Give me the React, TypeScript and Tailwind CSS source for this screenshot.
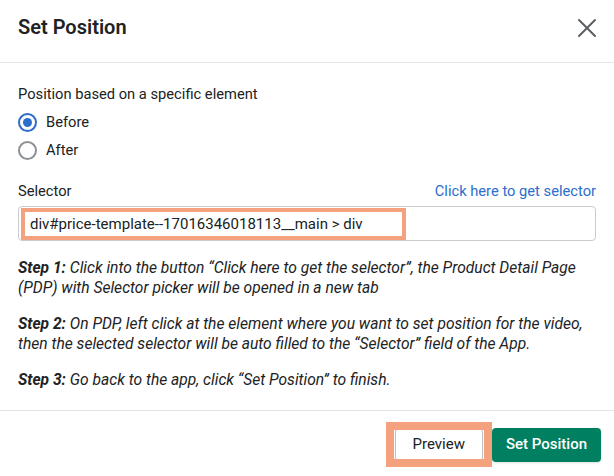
import React, { useState } from 'react';

const STEPS = [
  {
    label: 'Step 1:',
    text: ' Click into the button \u201CClick here to get the selector\u201D, the Product Detail Page (PDP) with Selector picker will be opened in a new tab',
  },
  {
    label: 'Step 2:',
    text: ' On PDP, left click at the element where you want to set position for the video, then the selected selector will be auto filled to the \u201CSelector\u201D field of the App.',
  },
  {
    label: 'Step 3:',
    text: ' Go back to the app, click \u201CSet Position\u201D to finish.',
  },
];

function Radio({ label, checked, onSelect }: { label: string; checked: boolean; onSelect: () => void }) {
  return (
    <label className="flex h-[28px] items-center gap-[9px] cursor-pointer" onClick={onSelect}>
      <span
        className={
          checked
            ? 'flex h-[19px] w-[19px] items-center justify-center rounded-full border-2 border-[#2c6ecb]'
            : 'flex h-[19px] w-[19px] items-center justify-center rounded-full border-2 border-[#8c9196]'
        }
      >
        {checked && <span className="h-[9px] w-[9px] rounded-full bg-[#2c6ecb]" />}
      </span>
      <span className="text-[14.7px] leading-[20px]">{label}</span>
    </label>
  );
}

export default function App() {
  const [position, setPosition] = useState<'before' | 'after'>('before');
  const [selector, setSelector] = useState('div#price-template--17016346018113__main > div');

  return (
    <div className="h-[476px] w-[614px] bg-white text-[#202223] font-['Roboto',sans-serif]">
      <div className="flex h-[63px] items-start justify-between border-b border-[#e1e3e5] pl-[18px] pr-[17px] pt-[15px]">
        <h2 className="text-[20px] leading-[24px] font-semibold">Set Position</h2>
        <button className="mt-[3px] text-[#5c5f62]" aria-label="Close">
          <svg width="20" height="20" viewBox="0 0 20 20" fill="none" stroke="currentColor" strokeWidth="2" strokeLinecap="round">
            <path d="M2 2L18 18M18 2L2 18" />
          </svg>
        </button>
      </div>

      <div className="px-[18px] pb-[19px] pt-[21px]">
        <p className="text-[14.7px] leading-[20px]">Position based on a specific element</p>
        <div className="mt-[4px]">
          <Radio label="Before" checked={position === 'before'} onSelect={() => setPosition('before')} />
          <Radio label="After" checked={position === 'after'} onSelect={() => setPosition('after')} />
        </div>

        <div className="mt-[17px] flex items-center justify-between text-[14.7px] leading-[20px]">
          <span>Selector</span>
          <a className="text-[#2c6ecb]" href="#">Click here to get selector</a>
        </div>
        <div className="relative mt-[5px] h-[35px] rounded-[4px] border border-[#c9cccf]">
          <input
            value={selector}
            onChange={(e) => setSelector(e.target.value)}
            className="h-full w-full bg-transparent pl-[11px] text-[15px] outline-none"
          />
          <div className="pointer-events-none absolute left-[2px] top-[1px] h-[32px] w-[385px] border-[4px] border-[#f4a27e]" />
        </div>

        <div className="mt-[18px] space-y-[17px] text-[15.6px] leading-[19.5px] italic">
          {STEPS.map((s) => (
            <p key={s.label}>
              <span className="font-bold">{s.label}</span>
              {s.text}
            </p>
          ))}
        </div>
      </div>

      <div className="flex justify-end gap-[9px] border-t border-[#e1e3e5] pr-[13px] pt-[17px]">
        <div className="relative">
          <button className="h-[34px] rounded-[4px] border border-[#babfc3] bg-white px-[17px] text-[15px] font-normal">
            Preview
          </button>
          <div className="pointer-events-none absolute -bottom-[5px] -left-[9px] -right-[9px] -top-[6px] border-[8px] border-[#f4a27e]" />
        </div>
        <button className="h-[34px] rounded-[4px] bg-[#008060] px-[14px] text-[15px] font-medium text-white shadow-sm">
          Set Position
        </button>
      </div>
    </div>
  );
}
